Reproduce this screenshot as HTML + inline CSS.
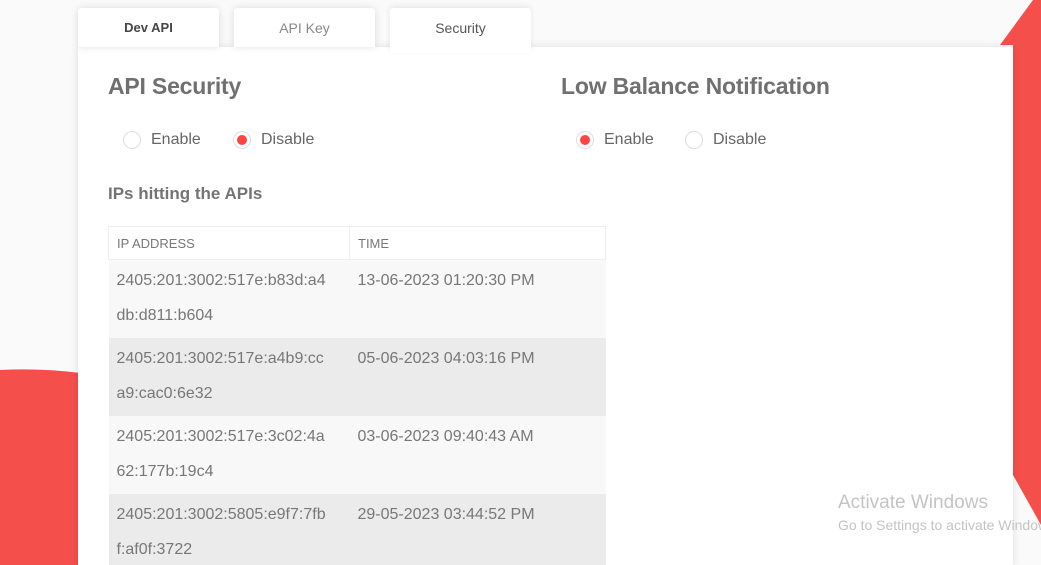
<!DOCTYPE html>
<html><head><style>
html,body{margin:0;width:1041px;height:565px;overflow:hidden}
body{background:#fafafa;font-family:"Liberation Sans",sans-serif;position:relative;color:#6f6f6f}
.abs{position:absolute}
.tab{position:absolute;top:8px;height:39px;width:141px;background:#fff;border-radius:3px 3px 0 0;box-shadow:0 0 8px rgba(0,0,0,.12);text-align:center;line-height:40px;font-size:14px;color:#888}
.card{position:absolute;left:78px;top:47px;width:935px;height:518px;background:#fff;box-shadow:0 0 8px rgba(0,0,0,.12)}
h1{position:absolute;margin:0;font-size:23px;font-weight:bold;color:#707070;letter-spacing:-0.2px}
.r{position:absolute;width:18px;height:18px;border:1px solid #ddd;border-radius:50%;box-sizing:border-box;background:#fff}
.r.on::after{content:"";position:absolute;left:3px;top:3px;width:10px;height:10px;border-radius:50%;background:#f44}
.lbl{position:absolute;font-size:16px;color:#666}
table{position:absolute;left:108px;top:226px;width:498px;border-collapse:collapse;font-size:16px;color:#777}
th{font-weight:normal;font-size:13px;text-align:left;height:32px;border:1px solid #eee;padding:0 8px;vertical-align:middle;background:#fff;box-sizing:border-box}
td{vertical-align:top;padding:3px 8px 0;height:78px;line-height:35px;box-sizing:border-box}
td:first-child{width:241px}
tr.a td{background:#f8f8f8}tr.b td{background:#ebebeb}
</style></head><body>
<svg class="abs" style="left:0;top:0" width="1041" height="565"><polygon points="1033,0 1041,0 1041,525 1013,475 1013,45 1000,45" fill="#f54f4c"/><path d="M0,370 Q40,368 80,373 L80,565 L0,565Z" fill="#f54f4c"/></svg>
<div class="card"></div>
<div class="tab" style="left:78px;color:#444;font-weight:bold;font-size:13px">Dev API</div>
<div class="tab" style="left:234px">API Key</div>
<div class="tab" style="left:390px;height:45px;color:#555;box-shadow:0 -2px 6px rgba(0,0,0,.08)">Security</div>
<h1 style="left:108px;top:73px">API Security</h1>
<h1 style="left:561px;top:73px">Low Balance Notification</h1>
<div class="r" style="left:123px;top:131px"></div><div class="lbl" style="left:151px;top:131px">Enable</div>
<div class="r on" style="left:233px;top:131px"></div><div class="lbl" style="left:261px;top:131px">Disable</div>
<div class="r on" style="left:576px;top:131px"></div><div class="lbl" style="left:604px;top:131px">Enable</div>
<div class="r" style="left:685px;top:131px"></div><div class="lbl" style="left:713px;top:131px">Disable</div>
<div class="abs" style="left:108px;top:184px;font-size:17px;font-weight:bold;color:#747474">IPs hitting the APIs</div>
<table>
<tr><th style="width:241px;height:33px">IP ADDRESS</th><th>TIME</th></tr>
<tr class="a"><td>2405:201:3002:517e:b83d:a4<br>db:d811:b604</td><td>13-06-2023 01:20:30 PM</td></tr>
<tr class="b"><td>2405:201:3002:517e:a4b9:cc<br>a9:cac0:6e32</td><td>05-06-2023 04:03:16 PM</td></tr>
<tr class="a"><td>2405:201:3002:517e:3c02:4a<br>62:177b:19c4</td><td>03-06-2023 09:40:43 AM</td></tr>
<tr class="b"><td>2405:201:3002:5805:e9f7:7fb<br>f:af0f:3722</td><td>29-05-2023 03:44:52 PM</td></tr>
</table>
<div class="abs" style="left:838px;top:492px;font-size:19px;color:#c4c4c4;white-space:nowrap">Activate Windows</div>
<div class="abs" style="left:838px;top:517px;font-size:14px;color:#c4c4c4;white-space:nowrap">Go to Settings to activate Windows.</div>
</body></html>
